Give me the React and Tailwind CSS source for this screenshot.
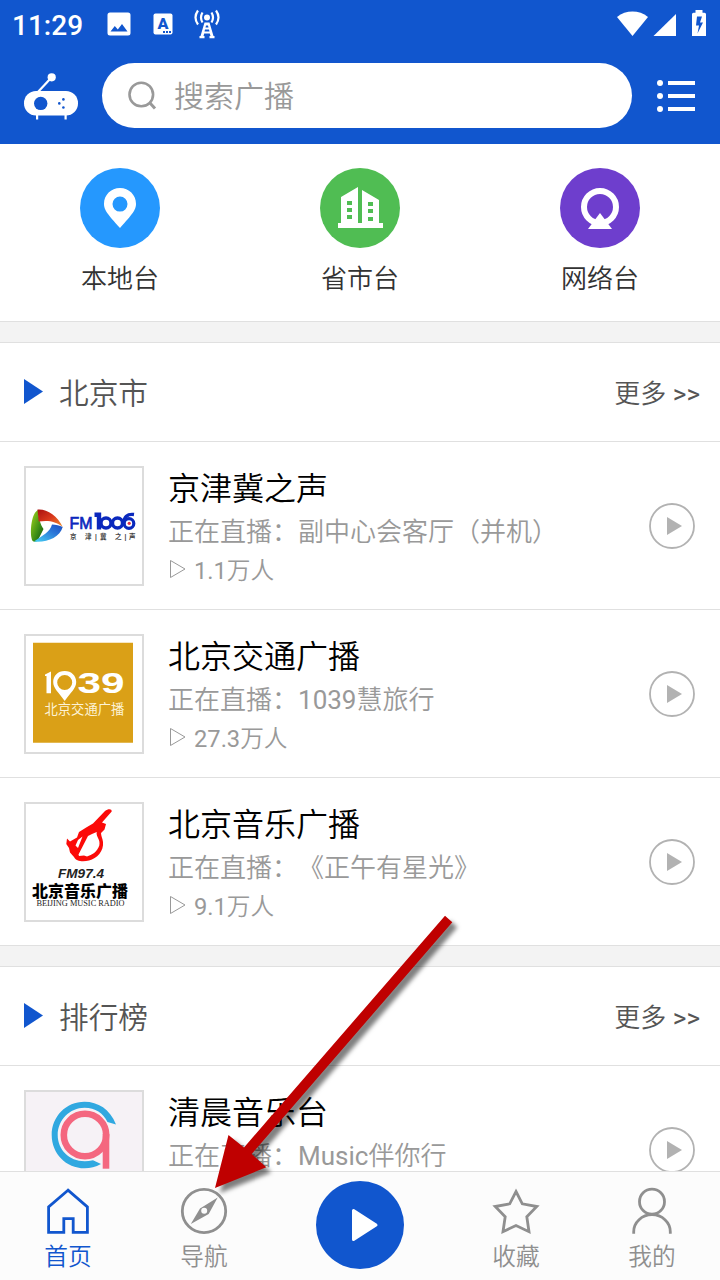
import React from 'react';

const categories = [
  {
    name: '本地台',
    color: 'bg-[#2598fe]',
    icon: (
      <path fillRule="evenodd" d="M40 20c9 0 16 7 16 15.8 0 6.2-3.4 10.2-16 24.2-12.6-14-16-18-16-24.2C24 27 31 20 40 20Zm0 8.6a7.5 7.5 0 1 0 0 15 7.5 7.5 0 0 0 0-15Z" />
    ),
  },
  {
    name: '省市台',
    color: 'bg-[#50bd53]',
    icon: (
      <path fillRule="evenodd" d="M18 55h3V29l17-10v36h4V22l17 10v23h4v5H18ZM27 33v4h5v-4Zm0 7v4h5v-4Zm0 7v4h5v-4ZM48 34v4h5v-4Zm0 7v4h5v-4Zm0 8v4h5v-4Z" />
    ),
  },
  {
    name: '网络台',
    color: 'bg-[#6e3ecd]',
    icon: (
      <>
        <circle cx="40" cy="39" r="16" fill="none" stroke="#fff" strokeWidth="6" />
        <path d="M40 45l12 16H28Z" />
      </>
    ),
  },
];

const LogoFm1006 = () => (
  <svg viewBox="0 0 116 116" className="w-full h-full" fontFamily="Liberation Sans, Noto Sans CJK SC, sans-serif">
    <defs>
      <linearGradient id="green" x1="0" y1="0" x2="1" y2="1">
        <stop offset="0" stopColor="#a4d51b" />
        <stop offset="0.6" stopColor="#3c8d16" />
        <stop offset="1" stopColor="#0d5310" />
      </linearGradient>
      <linearGradient id="red" x1="0" y1="0" x2="1" y2="1">
        <stop offset="0" stopColor="#a81010" />
        <stop offset="0.5" stopColor="#d9381c" />
        <stop offset="1" stopColor="#f0902e" />
      </linearGradient>
      <linearGradient id="blue" x1="0" y1="1" x2="1" y2="0">
        <stop offset="0" stopColor="#46d3f5" />
        <stop offset="0.6" stopColor="#2b77d8" />
        <stop offset="1" stopColor="#1b4bc0" />
      </linearGradient>
    </defs>
    <path d="M12 42C6 45 4 60 5.5 70c.6 4 3 4.600 6 3l6-12c-3-4-5-11-5.500-19Z" fill="url(#green)" />
    <path d="M11.500 41.500c9-1 20 6 25.200 17.500-7-6-15-7-24-5.500Z" fill="url(#red)" />
    <path d="M8 73.500c12 1.500 26-4 28.700-14.500-3-1.500-7-2.500-10.700-2.500C24 64 17 67 8 73.500Z" fill="url(#blue)" />
    <text x="43.500" y="61.300" fontSize="16.500" fill="#0a28bd" stroke="#0a28bd" strokeWidth="0.700" textLength="23" lengthAdjust="spacingAndGlyphs">FM</text>
    <path d="M68.500 46.700h4.500v14.800" fill="none" stroke="#0a28bd" strokeWidth="4.400" />
    <circle cx="80" cy="55" r="5" fill="none" stroke="#0a28bd" strokeWidth="3.400" />
    <circle cx="91.500" cy="55" r="5" fill="none" stroke="#0a28bd" strokeWidth="3.400" />
    <path d="M108 46.500c-7-1-10 3-10 8.500" fill="none" stroke="#0a28bd" strokeWidth="3.400" />
    <circle cx="103" cy="55.500" r="4.800" fill="#fff" stroke="#0a28bd" strokeWidth="3.200" />
    <circle cx="103.200" cy="55.300" r="1.600" fill="#e03046" />
    <text y="71" fontSize="6.500" fontWeight="bold" fill="#444">
      <tspan x="44">京</tspan>
      <tspan x="59">津</tspan>
      <tspan x="69">|</tspan>
      <tspan x="74">冀</tspan>
      <tspan x="89">之</tspan>
      <tspan x="98.500">|</tspan>
      <tspan x="103">声</tspan>
    </text>
  </svg>
);

const Logo1039 = () => (
  <svg viewBox="0 0 116 116" className="w-full h-full">
    <path d="M7 6.700h100v100H7Z" fill="#daa017" />
    <path d="M19 38.500l6-3v21.800h-4.500V40H19Z" fill="#fff" />
    <path fillRule="evenodd" d="M38.700 35c6.800 0 11.500 4.800 11.500 11 0 6-5 10-11.500 19-6.500-9-11.500-13-11.500-19 0-6.200 4.700-11 11.500-11Zm0 4a7.500 7.500 0 1 0 0 15 7.500 7.500 0 0 0 0-15Z" fill="#fff" />
    <text x="51.500" y="57" fontSize="30" fontWeight="bold" fontFamily="Liberation Sans, sans-serif" fill="#fff" textLength="47" lengthAdjust="spacingAndGlyphs">39</text>
    <text x="18.500" y="77.700" fontSize="13.300" fontFamily="Noto Sans CJK SC, sans-serif" fill="#fdf3d5">北京交通广播</text>
  </svg>
);

const LogoFm974 = () => (
  <svg viewBox="0 0 116 116" className="w-full h-full">
    <path
      fillRule="evenodd"
      fill="#fb0a08"
      d="M85.700 7.500C86 4.500 82 4.500 79 7L67 19.500l-6 3.500-8 5-2 5.500-7 4-3-3-.7 5.500 2.700 4 1 4.500 4 4.500c2 4.500 9 5 15 3.500C71 54.500 78 47 77 38c-.5-4-2-6-2-9l3.500-3.500L80 20l-4-1.500Zm-15 20.500c-1 5 4 7 2.600 13.500C71 48 66 51 61 52.500l-3-1-5 .500-.5-1.500L62 32l4-2Zm-14.200 4.500L52 44l-2.500-2.500 2.500-5.500Z"
    />
    <text x="32" y="74.300" fontSize="12.800" fontStyle="italic" fontWeight="600" fontFamily="Liberation Sans, sans-serif" fill="#222" textLength="46" lengthAdjust="spacingAndGlyphs">FM97.4</text>
    <text x="6" y="92.500" fontSize="16" fontWeight="900" fontFamily="Noto Sans CJK SC, sans-serif" fill="#000">北京音乐广播</text>
    <text x="10.500" y="102" fontSize="8" fontFamily="Liberation Serif, serif" fill="#222" textLength="88" lengthAdjust="spacingAndGlyphs">BEIJING MUSIC RADIO</text>
  </svg>
);

const LogoQingchen = () => (
  <svg viewBox="0 0 116 116" className="w-full h-full bg-[#f6f2f6]">
    <path d="M90 32.500C84 17 72 9.700 58.500 9.700 40 9.700 25.700 24.500 25.700 43S40 76.300 58.500 76.300c6 0 11-1.300 16.500-4.300l-8-3.800C47 73 31.700 60 31.700 43c0-15 12-27.300 26.800-27.300 11 0 18.500 5.300 23 14.300Z" fill="#30a8e0" />
    <circle cx="59" cy="43" r="21.200" fill="none" stroke="#f4677f" strokeWidth="6.600" />
    <path d="M76.700 42h6.600v34.700h-6.600Z" fill="#f4677f" />
  </svg>
);

const beijingStations = [
  { name: '京津冀之声', program: '副中心会客厅（并机）', listeners: '1.1万人', logo: <LogoFm1006 /> },
  { name: '北京交通广播', program: '1039慧旅行', listeners: '27.3万人', logo: <Logo1039 /> },
  { name: '北京音乐广播', program: '《正午有星光》', listeners: '9.1万人', logo: <LogoFm974 /> },
];

const rankedStations = [{ name: '清晨音乐台', program: 'Music伴你行', logo: <LogoQingchen /> }];

const StatusBar = () => (
  <div className="flex h-12 items-center text-white">
    <span className="ml-3 w-[94px] pt-[3px] font-[Roboto] text-[28px] font-medium leading-none">11:29</span>
    <svg width="116" height="48" viewBox="106 0 116 48" fill="#fff">
      <path fillRule="evenodd" d="M110 12.500h18a2.500 2.500 0 0 1 2.500 2.500v18a2.500 2.500 0 0 1-2.500 2.500h-18a2.500 2.500 0 0 1-2.500-2.500V15a2.500 2.500 0 0 1 2.500-2.500Zm.5 19h17l-5.500-7.500-4.200 5.500-3-3.500Z" />
      <rect x="153.500" y="13.500" width="19" height="21" rx="2" />
      <text x="157.500" y="28.700" fontSize="15" fontWeight="900" fontFamily="Roboto, sans-serif" fill="#1156ce" textLength="11" lengthAdjust="spacingAndGlyphs">A</text>
      <path d="M163 31h2v2h-2Zm3 0h2v2h-2Zm3 0h2v2h-2Z" fill="#1156ce" />
      <circle cx="207" cy="17.500" r="3" />
      <path fillRule="evenodd" d="M204.500 22.500h5L213.500 36h1v2.300h-5V36h1l-.7-2.500h-5.600l-.7 2.500h1v2.300h-5V36h1Zm1.500 3-.5 2h3l-.5-2Zm-1 4-.5 2h5l-.5-2Z" />
      <path d="M202.500 12.500q-3 5 0 10M198 10.500q-5 7 0 14M211.500 12.500q3 5 0 10M216 10.500q5 7 0 14" fill="none" stroke="#fff" strokeWidth="2.200" />
    </svg>
    <svg width="92" height="48" viewBox="616 0 92 48" fill="#fff" className="ml-auto mr-3">
      <path d="M617 17c9-7.300 22-7.300 31 0L632.500 36Z" />
      <path d="M676 14v22h-22.500Z" />
      <path fillRule="evenodd" d="M695.500 10h7v2.800h2a1.500 1.500 0 0 1 1.500 1.500V36h-14V14.300a1.500 1.500 0 0 1 1.500-1.500h2Zm1.500 6.500-1 9h3l-1.500 8 5.500-11h-3l2-6Z" />
    </svg>
  </div>
);

const SearchHeader = () => (
  <div className="flex h-24 items-center">
    <svg width="54" height="48" viewBox="24 72 54 48" className="ml-6 mr-6 shrink-0">
      <path d="M37.500 92.500L51 78" stroke="#fff" strokeWidth="2.200" />
      <circle cx="51.700" cy="77.300" r="4.100" fill="#fff" />
      <rect x="24" y="91" width="54" height="24.500" rx="12" fill="#fff" />
      <path d="M36 114h2.200v5.500H36Zm28.500 0h2.200v5.500h-2.200Z" fill="#fff" />
      <circle cx="40.700" cy="103.400" r="6.700" fill="#1156ce" />
      <circle cx="59.300" cy="103.400" r="1.300" fill="#1156ce" />
      <circle cx="63.400" cy="99.400" r="1.300" fill="#1156ce" />
      <circle cx="63.400" cy="107.500" r="1.300" fill="#1156ce" />
    </svg>
    <div className="mb-px flex h-[65px] w-[530px] items-center rounded-full bg-white pl-6">
      <svg width="32" height="32" viewBox="0 0 32 32" fill="none" stroke="#999" strokeWidth="2.600">
        <circle cx="15.300" cy="14.500" r="11.800" />
        <path d="M23.500 22.500l5.500 6" strokeWidth="3" />
      </svg>
      <span className="ml-4 pt-[3px] text-[30px] leading-none text-[#999]">搜索广播</span>
    </div>
    <svg width="40" height="32" viewBox="656 80 40 32" fill="#fff" className="ml-6">
      <circle cx="660" cy="83" r="3" />
      <circle cx="660" cy="96" r="3" />
      <circle cx="660" cy="109" r="3" />
      <path d="M668 81h27v4h-27Zm0 13h27v4h-27Zm0 13h27v4h-27Z" />
    </svg>
  </div>
);

const StationRow = ({ station }) => (
  <div className="flex h-[168px] border-b border-[#e0e0e0] pl-6 pr-[25px] last:h-[167px] last:border-b-0">
    <div className="mt-6 h-[120px] w-[120px] shrink-0 border-2 border-[#dcdcdc]">{station.logo}</div>
    <div className="ml-6 flex-1 whitespace-nowrap pt-[27px]">
      <div className="text-[32px] leading-[40px] text-black">{station.name}</div>
      <div className="mt-[3px] text-[26px] leading-[40px] text-[#999] [text-spacing-trim:space-all]">
        正在直播：{station.program}
      </div>
      {station.listeners && (
        <div className="flex items-center text-[23.700px] leading-[38px] text-[#999]">
          <svg width="18" height="20" viewBox="0 0 18 20" className="mr-2 -mt-1" fill="none" stroke="#999">
            <path d="M2.500 1.500v17L17 10Z" />
          </svg>
          {station.listeners}
        </div>
      )}
    </div>
    <svg width="46" height="46" viewBox="0 0 46 46" className="mt-[61px] shrink-0">
      <circle cx="23" cy="23" r="22" fill="none" stroke="#b2b2b2" strokeWidth="1.800" />
      <path d="M18 14v18l15-9Z" fill="#b2b2b2" />
    </svg>
  </div>
);

const Section = ({ title, stations }) => (
  <section>
    <div className="h-[22px] border-y border-[#e0e0e0] bg-[#f3f3f3]" />
    <div className="flex h-[99px] items-center border-b border-[#e0e0e0] pl-6 pr-5 text-[#555]">
      <svg width="19" height="26" viewBox="0 0 19 26" fill="#1156ce">
        <path d="M0 0v25L19 12.500Z" />
      </svg>
      <h2 className="ml-4 pt-[4px] text-[29.700px] leading-none">{title}</h2>
      <span className="ml-auto pt-[4px] text-[26px] leading-none">更多 &gt;&gt;</span>
    </div>
    {stations.map((station) => (
      <StationRow key={station.name} station={station} />
    ))}
  </section>
);

const NavItem = ({ label, active, children }) => (
  <button className={`flex w-[136px] flex-col items-center pt-[15px] ${active ? 'text-[#1156ce]' : 'text-[#8f8f8f]'}`}>
    <svg width="48" height="48" viewBox="0 0 48 48" fill="none" stroke="currentColor" strokeWidth="2.800">
      {children}
    </svg>
    <span className="mt-[9px] text-[23.700px] leading-[26px]">{label}</span>
  </button>
);

const BottomNav = () => (
  <nav className="flex h-[109px] shrink-0 border-t border-[#e0e0e0] bg-[#fcfcfc]">
    <NavItem label="首页" active>
      <path d="M24 3.200L4.600 20v25.300h15.200V31.700h9.400v13.600h14.200V20Z" />
    </NavItem>
    <NavItem label="导航">
      <circle cx="24" cy="24" r="21.700" />
      <path fillRule="evenodd" stroke="none" fill="currentColor" d="M37.700 10.500l-9 16.500-17.900 10L20 21.500Zm-13.500 10.300a3 3 0 1 0 0 6 3 3 0 0 0 0-6Z" />
    </NavItem>
    <div className="flex w-[176px] justify-center pt-[9px]">
      <button className="flex h-[88px] w-[88px] items-center justify-center rounded-full bg-[#1156ce]">
        <svg width="88" height="88" viewBox="0 0 88 88">
          <path d="M37.500 29.500v29L60 44Z" fill="#fff" stroke="#fff" strokeWidth="3" strokeLinejoin="round" />
        </svg>
      </button>
    </div>
    <NavItem label="收藏">
      <path d="M24 4.500l6.300 12.300 14.500 2.700-10 10.200 2.200 15L24 38.500l-13 6.200 2.200-15-10-10.200 14.500-2.700Z" />
    </NavItem>
    <NavItem label="我的">
      <circle cx="24" cy="14.700" r="12.500" />
      <path d="M5.700 46.700v-2a18.300 17 0 0 1 36.600 0v2" />
    </NavItem>
  </nav>
);

// Red pointer that leads to the 导航 tab
const Pointer = () => (
  <svg
    width="720"
    height="1280"
    viewBox="0 0 720 1280"
    className="pointer-events-none absolute left-0 top-0 drop-shadow-[5px_5px_2px_rgba(0,0,0,0.5)]"
  >
    <path d="M445 915.700l7.300 6.600L251.700 1154l14.600 13.300L215 1188l13.500-53 15.500 12.500Z" fill="#bf0000" />
  </svg>
);

const App = () => {
  return (
    <div className="relative flex h-[1280px] w-[720px] flex-col overflow-hidden bg-white font-[Roboto,'Noto_Sans_CJK_SC_DemiLight','Noto_Sans_CJK_SC',sans-serif]">
      <header className="h-36 shrink-0 bg-[#1156ce]">
        <StatusBar />
        <SearchHeader />
      </header>
      <main className="min-h-0 flex-1 overflow-hidden">
        <div className="flex h-[177px] pt-6">
          {categories.map((item) => (
            <div key={item.name} className="flex flex-1 flex-col items-center">
              <div className={`h-20 w-20 rounded-full ${item.color}`}>
                <svg width="80" height="80" viewBox="0 0 80 80" fill="#fff">
                  {item.icon}
                </svg>
              </div>
              <span className="mt-3 text-[26px] leading-[38px] text-[#333]">{item.name}</span>
            </div>
          ))}
        </div>
        <Section title="北京市" stations={beijingStations} />
        <Section title="排行榜" stations={rankedStations} />
      </main>
      <BottomNav />
      <Pointer />
    </div>
  );
};

export default App;
